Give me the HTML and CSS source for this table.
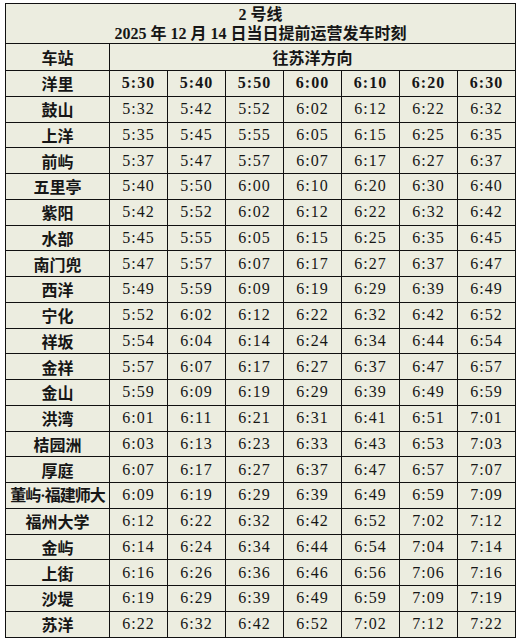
FILE: index.html
```html
<!DOCTYPE html>
<html lang="zh-CN">
<head>
<meta charset="utf-8">
<title>2号线 时刻表</title>
<link rel="stylesheet" href="styles.css">
</head>
<body>
<table class="timetable">
  <colgroup>
    <col class="c-station">
    <col class="c-time" span="7">
  </colgroup>
  <thead>
    <tr class="title-row">
      <th colspan="8">
        <div class="title-line">2 号线</div>
        <div class="title-line">2025 年 12 月 14 日当日提前运营发车时刻</div>
      </th>
    </tr>
    <tr class="head-row">
      <th class="station">车站</th>
      <th class="dir" colspan="7">往苏洋方向</th>
    </tr>
  </thead>
  <tbody>
    <tr class="first"><th class="station">洋里</th><td>5:30</td><td>5:40</td><td>5:50</td><td>6:00</td><td>6:10</td><td>6:20</td><td>6:30</td></tr>
    <tr><th class="station">鼓山</th><td>5:32</td><td>5:42</td><td>5:52</td><td>6:02</td><td>6:12</td><td>6:22</td><td>6:32</td></tr>
    <tr><th class="station">上洋</th><td>5:35</td><td>5:45</td><td>5:55</td><td>6:05</td><td>6:15</td><td>6:25</td><td>6:35</td></tr>
    <tr><th class="station">前屿</th><td>5:37</td><td>5:47</td><td>5:57</td><td>6:07</td><td>6:17</td><td>6:27</td><td>6:37</td></tr>
    <tr><th class="station">五里亭</th><td>5:40</td><td>5:50</td><td>6:00</td><td>6:10</td><td>6:20</td><td>6:30</td><td>6:40</td></tr>
    <tr><th class="station">紫阳</th><td>5:42</td><td>5:52</td><td>6:02</td><td>6:12</td><td>6:22</td><td>6:32</td><td>6:42</td></tr>
    <tr><th class="station">水部</th><td>5:45</td><td>5:55</td><td>6:05</td><td>6:15</td><td>6:25</td><td>6:35</td><td>6:45</td></tr>
    <tr><th class="station">南门兜</th><td>5:47</td><td>5:57</td><td>6:07</td><td>6:17</td><td>6:27</td><td>6:37</td><td>6:47</td></tr>
    <tr><th class="station">西洋</th><td>5:49</td><td>5:59</td><td>6:09</td><td>6:19</td><td>6:29</td><td>6:39</td><td>6:49</td></tr>
    <tr><th class="station">宁化</th><td>5:52</td><td>6:02</td><td>6:12</td><td>6:22</td><td>6:32</td><td>6:42</td><td>6:52</td></tr>
    <tr><th class="station">祥坂</th><td>5:54</td><td>6:04</td><td>6:14</td><td>6:24</td><td>6:34</td><td>6:44</td><td>6:54</td></tr>
    <tr><th class="station">金祥</th><td>5:57</td><td>6:07</td><td>6:17</td><td>6:27</td><td>6:37</td><td>6:47</td><td>6:57</td></tr>
    <tr><th class="station">金山</th><td>5:59</td><td>6:09</td><td>6:19</td><td>6:29</td><td>6:39</td><td>6:49</td><td>6:59</td></tr>
    <tr><th class="station">洪湾</th><td>6:01</td><td>6:11</td><td>6:21</td><td>6:31</td><td>6:41</td><td>6:51</td><td>7:01</td></tr>
    <tr><th class="station">桔园洲</th><td>6:03</td><td>6:13</td><td>6:23</td><td>6:33</td><td>6:43</td><td>6:53</td><td>7:03</td></tr>
    <tr><th class="station">厚庭</th><td>6:07</td><td>6:17</td><td>6:27</td><td>6:37</td><td>6:47</td><td>6:57</td><td>7:07</td></tr>
    <tr><th class="station long">董屿<span class="dot">·</span>福建师大</th><td>6:09</td><td>6:19</td><td>6:29</td><td>6:39</td><td>6:49</td><td>6:59</td><td>7:09</td></tr>
    <tr><th class="station">福州大学</th><td>6:12</td><td>6:22</td><td>6:32</td><td>6:42</td><td>6:52</td><td>7:02</td><td>7:12</td></tr>
    <tr><th class="station">金屿</th><td>6:14</td><td>6:24</td><td>6:34</td><td>6:44</td><td>6:54</td><td>7:04</td><td>7:14</td></tr>
    <tr><th class="station">上街</th><td>6:16</td><td>6:26</td><td>6:36</td><td>6:46</td><td>6:56</td><td>7:06</td><td>7:16</td></tr>
    <tr><th class="station">沙堤</th><td>6:19</td><td>6:29</td><td>6:39</td><td>6:49</td><td>6:59</td><td>7:09</td><td>7:19</td></tr>
    <tr><th class="station">苏洋</th><td>6:22</td><td>6:32</td><td>6:42</td><td>6:52</td><td>7:02</td><td>7:12</td><td>7:22</td></tr>
  </tbody>
</table>
</body>
</html>
```

FILE: styles.css
```css
html, body {
  margin: 0;
  padding: 0;
  background: #ffffff;
}

.timetable {
  border-collapse: collapse;
  table-layout: fixed;
  width: 510px;
  margin: 3px 0 0 5px;
  background: #ecede0;
  color: #161616;
  font-family: "Liberation Serif", "Noto Sans CJK SC", serif;
  font-size: 16px;
}

.c-station {
  width: 104px;
}

.c-time {
  width: 58px;
}

.timetable th,
.timetable td {
  border: 1px solid #111;
  padding: 0;
  text-align: center;
  vertical-align: middle;
  line-height: 18px;
}

.title-row {
  height: 40px;
}

.title-row th {
  font-weight: 700;
  font-family: "Liberation Serif", "Noto Sans CJK SC", serif;
  padding-top: 1px;
}

.title-line {
  line-height: 19px;
}

.head-row {
  height: 27px;
}

.station {
  font-family: "Noto Sans CJK SC", sans-serif;
  font-weight: 700;
  font-size: 16px;
  white-space: nowrap;
}

.dir {
  font-family: "Noto Sans CJK SC", sans-serif;
  font-weight: 700;
  text-align: left;
  padding-left: 0;
}

.head-row .dir {
  text-align: center;
}

.long {
  letter-spacing: -1px;
}

.dot {
  font-family: "Liberation Serif", serif;
  font-weight: 700;
}

tbody tr {
  height: 25.75px;
}

tbody td {
  letter-spacing: 1px;
  font-weight: 400;
  padding-left: 1px;
}

tbody tr.first td {
  font-weight: 700;
}
```
